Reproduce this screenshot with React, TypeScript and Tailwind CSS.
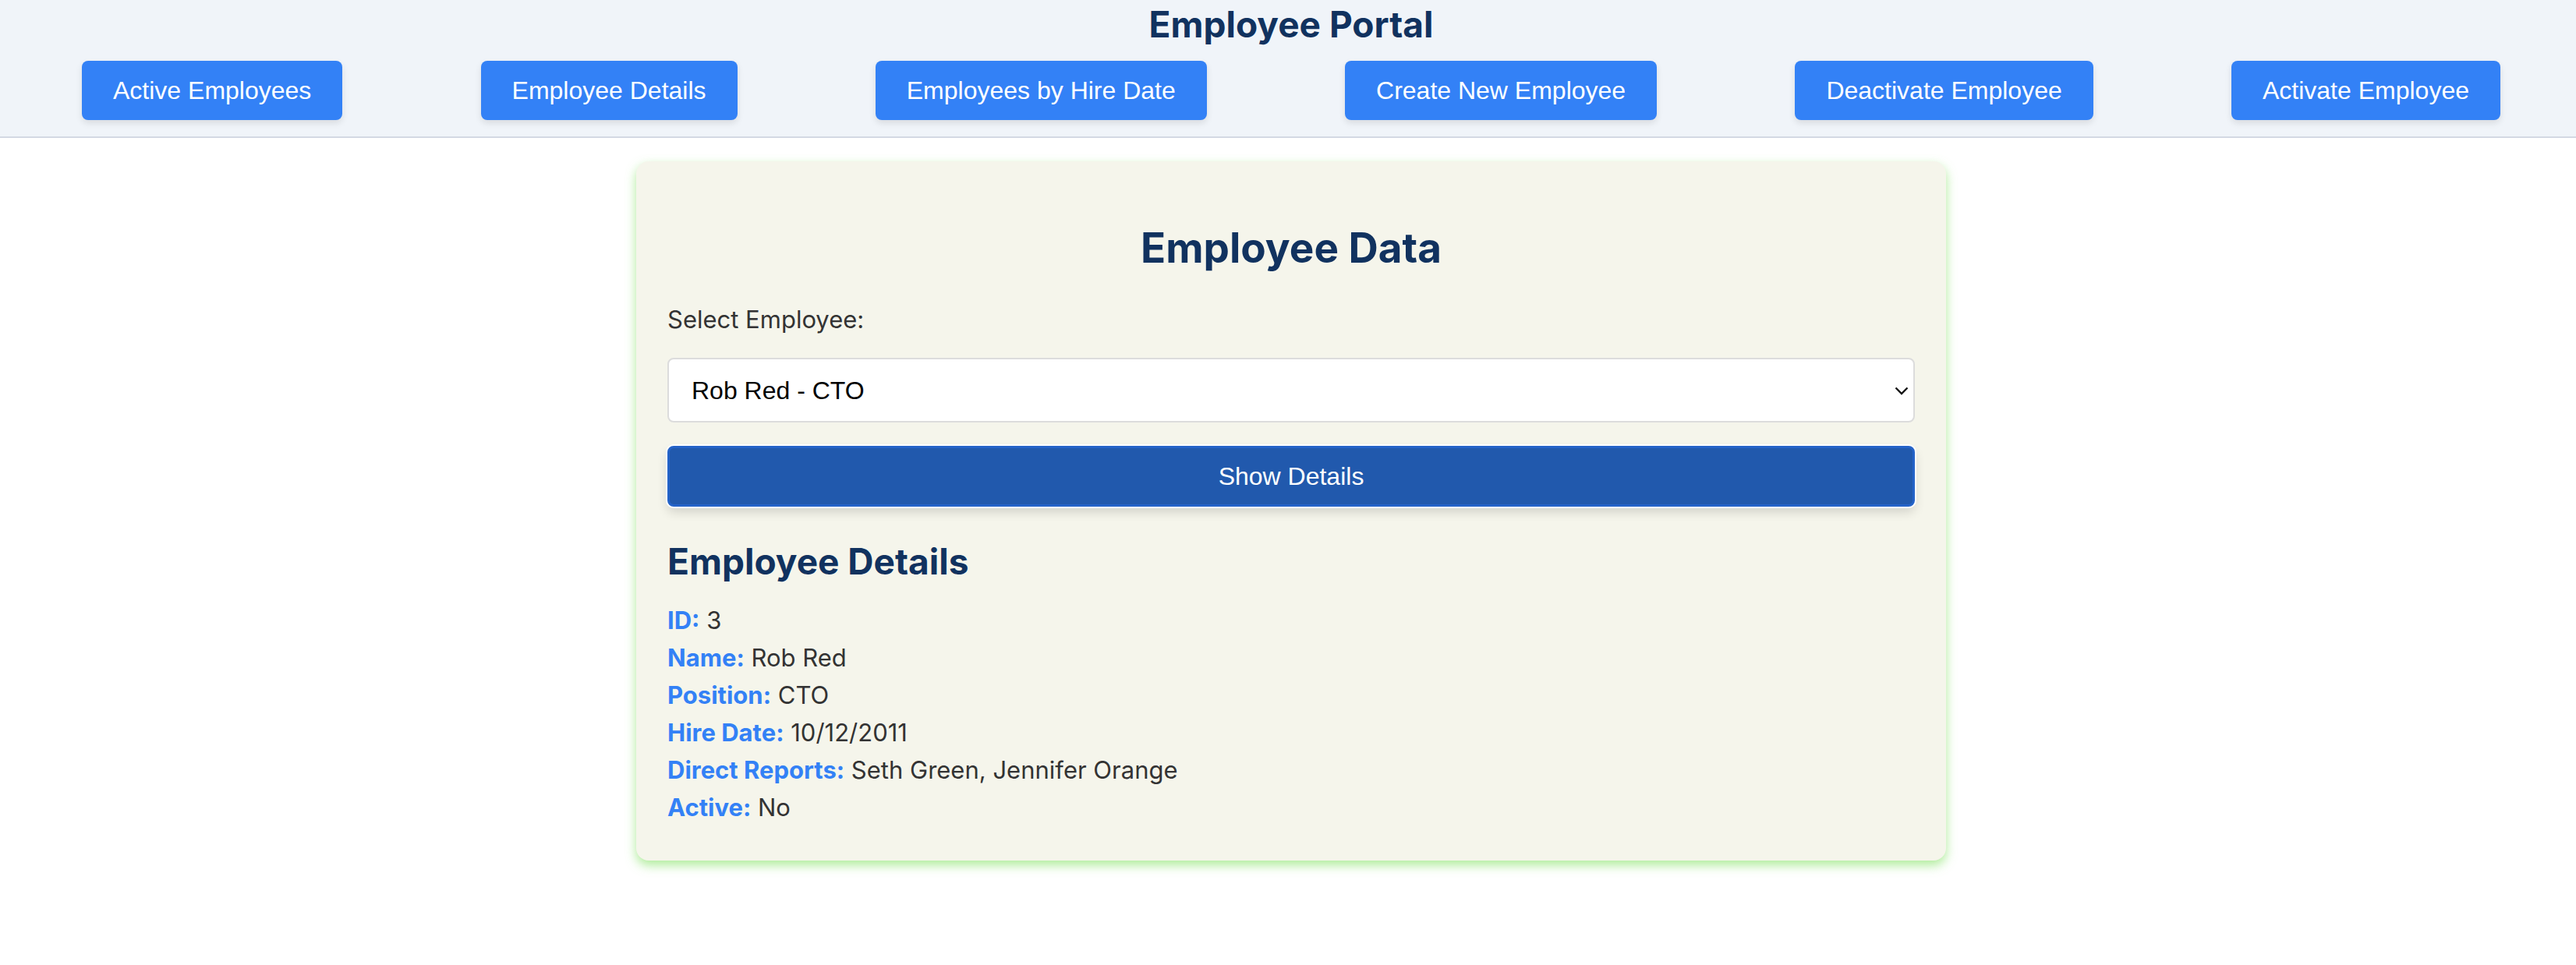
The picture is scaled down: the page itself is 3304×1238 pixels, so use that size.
import React from "react";

const navItems = [
  "Active Employees",
  "Employee Details",
  "Employees by Hire Date",
  "Create New Employee",
  "Deactivate Employee",
  "Activate Employee",
];

const details: [string, string][] = [
  ["ID:", "3"],
  ["Name:", "Rob Red"],
  ["Position:", "CTO"],
  ["Hire Date:", "10/12/2011"],
  ["Direct Reports:", "Seth Green, Jennifer Orange"],
  ["Active:", "No"],
];

export default function App() {
  return (
    <div className="min-h-screen bg-white font-['Inter',sans-serif]">
      <header className="bg-[#f0f4f9] border-b-2 border-[#d3d8e3] pt-[3px] pb-[21px]">
        <h1 className="text-center text-[46px] leading-[56px] font-bold text-[#11325f] pl-[8px]">
          Employee Portal
        </h1>
        <nav className="mt-[19px] flex justify-between pl-[105px] pr-[97px]">
          {navItems.map((t) => (
            <button
              key={t}
              className="bg-[#3381f6] text-white font-['Liberation_Sans',Arial,sans-serif] text-[32px] leading-[36px] px-[40px] h-[76px] rounded-[8px] shadow-[0_4px_8px_rgba(0,0,0,0.1)]"
            >
              {t}
            </button>
          ))}
        </nav>
      </header>

      <main className="flex justify-center pt-[30px] pl-[8px]">
        <div className="w-[1680px] bg-[#f5f5eb] rounded-[16px] px-[40px] pt-[40px] pb-[44px] shadow-[0_6px_14px_rgba(140,228,110,0.7)]">
          <h2 className="mt-[40px] text-center text-[53px] leading-[63px] font-bold text-[#11325f]">
            Employee Data
          </h2>
          <label className="block mt-[36px] text-[31px] leading-[48px] text-[#333333]">
            Select Employee:
          </label>
          <div className="relative mt-[25px]">
            <div className="h-[83px] w-full bg-white border-2 border-[#dcdcdc] rounded-[8px] flex items-center pl-[29px] font-['Liberation_Sans',Arial,sans-serif] text-[32px] text-black">
              Rob Red - CTO
            </div>
            <svg
              className="absolute right-[8px] top-[37px]"
              width="18"
              height="11"
              viewBox="0 0 18 11"
              fill="none"
            >
              <path d="M1.5 1.5L9 9L16.5 1.5" stroke="#111" strokeWidth="2.4" />
            </svg>
          </div>
          <button className="mt-[30px] w-full h-[78px] bg-[#2159ad] border-[3px] border-[#2463c8] rounded-[8px] text-white font-['Liberation_Sans',Arial,sans-serif] text-[32px] shadow-[0_0_0_2px_#ffffff,0_7px_14px_rgba(0,0,0,0.14)]">
            Show Details
          </button>
          <h3 className="mt-[42px] text-[46px] leading-[56px] font-bold text-[#11325f]">
            Employee Details
          </h3>
          <div className="mt-[24px]">
            {details.map(([k, v]) => (
              <p key={k} className="text-[31px] leading-[48px] text-[#333333]">
                <span className="font-bold text-[#3381f6]">{k}</span> {v}
              </p>
            ))}
          </div>
        </div>
      </main>
    </div>
  );
}
